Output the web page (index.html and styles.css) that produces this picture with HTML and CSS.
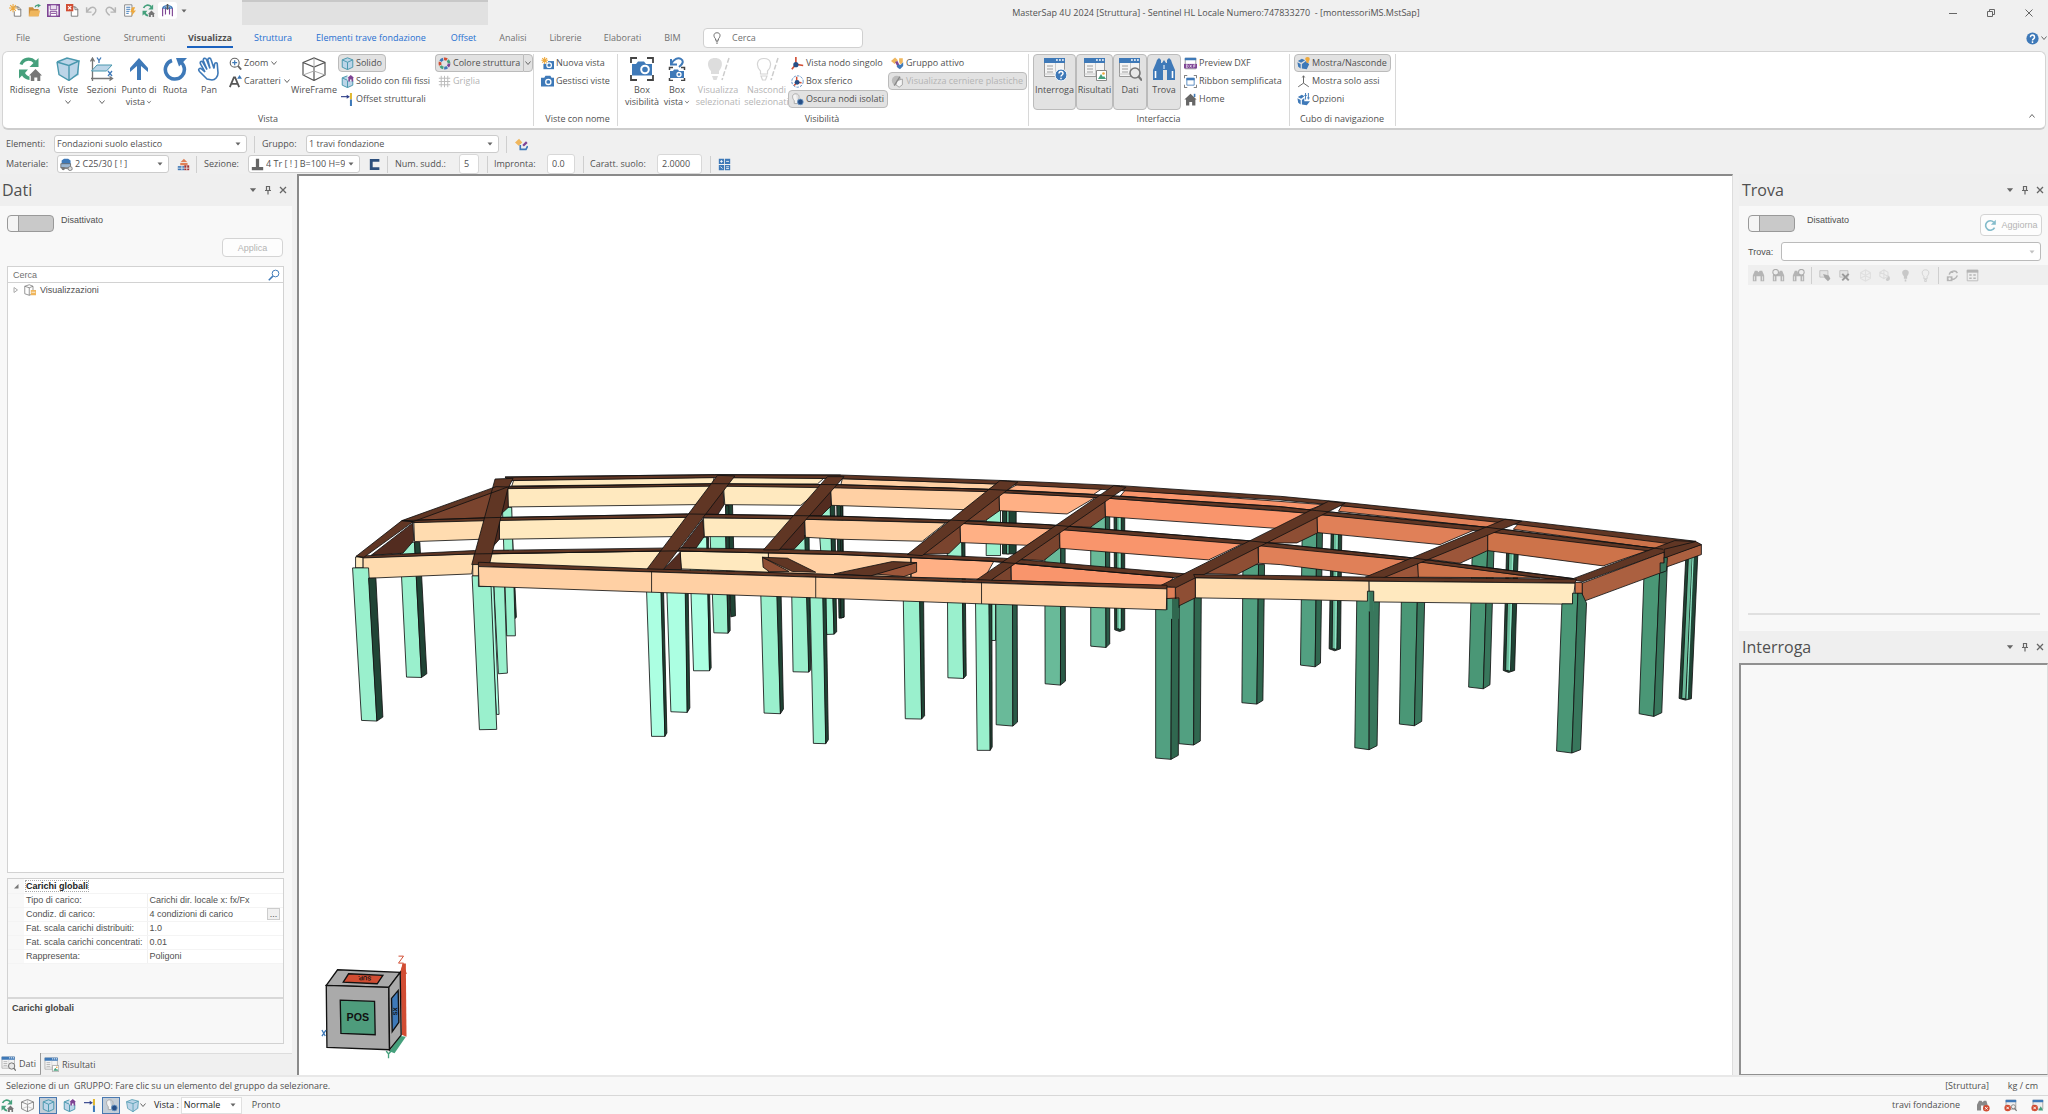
FILE: index.html
```html
<!DOCTYPE html>
<html lang="it">
<head>
<meta charset="utf-8">
<title>MasterSap 4U 2024 [Struttura]</title>
<link rel="stylesheet" href="styles.css">
</head>
<body>
<svg class="defs" aria-hidden="true">
  <symbol id="i-chev" viewBox="0 0 8 8"><path d="M1.5 2.5 4 5.5 6.500 2.500" fill="none" stroke="#666"/></symbol>
  <symbol id="i-tri" viewBox="0 0 8 8"><path d="M1.500 2.500h5L4 5.500z" fill="#666"/></symbol>
  <symbol id="i-pin" viewBox="0 0 10 10"><path d="M3.500 1v4M3 1.500h4M6.500 1v4M2 5.500h6M5 6v3.500" fill="none" stroke="#666" stroke-width="1.200"/></symbol>
  <symbol id="i-x" viewBox="0 0 10 10"><path d="M2 2l6 6M8 2 2 8" fill="none" stroke="#666" stroke-width="1.300"/></symbol>
  <symbol id="i-new" viewBox="0 0 16 16"><path d="M6 3.500h5.500l3 3V15h-8V9" fill="#fff" stroke="#666"/><path d="M11 3.500v3.500h3.500" fill="none" stroke="#666"/><path d="M5 0v10M0 5h10M1.500 1.500l7 7M8.500 1.500l-7 7" stroke="#eda83c" stroke-width="1.300"/></symbol>
  <symbol id="i-open" viewBox="0 0 16 16"><path d="M1 4h5l1.500 2H13v9H1z" fill="#c98d3c"/><path d="M3 8h12l-2 7H1z" fill="#efb65d"/><path d="M9 4c0-2 1.500-2.500 4-2.500" fill="none" stroke="#45a07c" stroke-width="1.500"/><path d="M12 0l4 1.500-4 3z" fill="#45a07c"/></symbol>
  <symbol id="i-save" viewBox="0 0 16 16"><path d="M1 1h14v14H1z" fill="#fff" stroke="#7e4494" stroke-width="2"/><path d="M4 1h8v6H4z" fill="#e9dcef" stroke="#7e4494"/><path d="M4 9h8v6H4zM5 11.500h6" fill="#fff" stroke="#7e4494" stroke-width="1.200"/></symbol>
  <symbol id="i-closedoc" viewBox="0 0 16 16"><path d="M6 3.500h5.500l3 3V15h-8V9" fill="#fff" stroke="#666"/><path d="M11 3.500v3.500h3.500" fill="none" stroke="#666"/><path d="M0 0h9v9H0z" fill="#d14d33"/><path d="M2.500 2.500l4 4M6.500 2.500l-4 4" stroke="#fff" stroke-width="1.400"/></symbol>
  <symbol id="i-undo" viewBox="0 0 16 16"><path d="M2 4v6h6M2.500 9.500C5 5 9 2.500 12 5s1 6-3 9" fill="none" stroke="#b5b5b5" stroke-width="1.800"/></symbol>
  <symbol id="i-docflash" viewBox="0 0 16 16"><path d="M2 1h9v14H2z" fill="#fff" stroke="#777"/><path d="M4 4h5M4 6.500h5M4 9h4M4 11.500h3" stroke="#3e79b8" stroke-width="1.200"/><path d="M11 4h4l-2 4h3l-6 7 1.500-5H9z" fill="#eda83c"/></symbol>
  <symbol id="i-redraw" viewBox="0 0 24 24"><path d="M3 7.500C5 2 12 0 17 5" fill="none" stroke="#45a07c" stroke-width="3.200"/><path d="M20.500 1v9h-9z" fill="#45a07c"/><path d="M1 12.500h9L7 16c1 2 2.500 3 4.500 3.500V23C8 22.500 5.500 21 4 18.500L1 21.500z" fill="#45a07c"/><path d="M17.500 12 24 18.500h-1.700V24h-3v-3.500h-3V24h-3.500v-5.500H11z" fill="#767676"/></symbol>
  <symbol id="i-frame" viewBox="0 0 16 16"><path d="M2 5v10M5.500 4v9M10.500 4v9M14 5v10" stroke="#7e4494" stroke-width="1.400"/><path d="M2 5c1-2 3-3 6-3s5 1 6 3M2 5h12M5 4l3 2 3-2" fill="none" stroke="#3e79b8" stroke-width="1.400"/><path d="M7 0h2v7H7z" fill="#555"/></symbol>
  <symbol id="i-cube" viewBox="0 0 24 24"><path d="M1 5 11 1l12 3v14l-10.500 5.500L3 17z" fill="#bcd5e8"/><path d="M1 5l12 3.500v15M1 5 11 1l12 3-10 4.500M1 5l2 12.500 10 6L21.500 17 23 4" fill="none" stroke="#4a98ae" stroke-width="1.400"/></symbol>
  <symbol id="i-section" viewBox="0 0 24 24"><path d="M2.500 24V2M0.500 4.500 2.500 1l2 3.500M1 21.500h21M19.500 19.500l3 2-3 2" fill="none" stroke="#767676" stroke-width="1.300"/><path d="M7 8h15l-5.500 6H1.500z" fill="#bcd5e8" stroke="#4a98ae"/><path d="M7 .500l2 3 2-3M9 3.500V6M18 14l4 5M22 14l-4 5" fill="none" stroke="#3e79b8" stroke-width="1.300"/></symbol>
  <symbol id="i-up" viewBox="0 0 24 24"><path d="M12 1 21 11v4l-7-6v14h-4V9l-7 6v-4z" fill="#3e79b8"/></symbol>
  <symbol id="i-rotate" viewBox="0 0 24 24"><path d="M9 3.500a9.500 9.500 0 1 0 7 .5" fill="none" stroke="#3e79b8" stroke-width="3.600"/><path d="M13 1h11l-8 8.500z" fill="#3e79b8"/></symbol>
  <symbol id="i-pan" viewBox="0 0 24 24"><path d="M10 22 2.500 14.500c-2-2.500.5-4 2-2.500L8 15 3.500 7c-1-2.500 1.500-3.500 2.500-1.500l4 7L6.500 4c-1-3 2-3.500 3-1.500l3.500 9L11 3.500c-.5-3 2.500-3 3-1l3 9 .5-4c.5-2.500 3-2 2.800 0L21 16c0 4-3 7-6 7z" fill="#fff" stroke="#3e79b8" stroke-width="1.600"/></symbol>
  <symbol id="i-zoom" viewBox="0 0 16 16"><circle cx="7" cy="7" r="5.500" fill="#fff" stroke="#666" stroke-width="1.400"/><path d="M7 4v6M4 7h6" stroke="#3e79b8" stroke-width="1.500"/><path d="M11 11l4 4.500" stroke="#666" stroke-width="2.200"/></symbol>
  <symbol id="i-font" viewBox="0 0 16 16"><path d="M1 15 6 3h1.500l5 12M3 11h7.500" fill="none" stroke="#555" stroke-width="2.200"/><path d="M13 0l3 4.500h-6z" fill="#3e79b8"/></symbol>
  <symbol id="i-wire" viewBox="0 0 24 24"><path d="M1 5.500 12 1l11 4.500V18l-11 5.500L1 18zM1 5.500 12 10l11-4.500M12 10v13.500" fill="none" stroke="#555" stroke-width="1.200"/><path d="M12 1v13M1 18l11-4 11 4" fill="none" stroke="#aaa"/></symbol>
  <symbol id="i-solid" viewBox="0 0 16 16"><path d="M1.500 3.500 8 1l6.500 2.500v9L8 15.500l-6.500-3z" fill="#bcd5e8"/><path d="M1.500 3.500 8 1l6.500 2.500v9L8 15.500l-6.500-3zM1.500 3.500 8 6.500l6.500-3M8 6.500v9" fill="none" stroke="#4a98ae" stroke-width="1.200"/></symbol>
  <symbol id="i-solidh" viewBox="0 0 16 16"><use href="#i-solid"/><path d="M8 0h8v7H8z" fill="#fff"/><path d="M12 0l4 3.500h-1V8h-2V5.500h-2V8H9V3.500H8z" fill="#7e4494"/></symbol>
  <symbol id="i-offset" viewBox="0 0 16 16"><path d="M0 4.500h8" stroke="#30408a" stroke-width="1.400"/><path d="M7 2l4 2.500L7 7z" fill="#30408a"/><path d="M11 0h2.500v8H11z" fill="#e0b830"/><path d="M11 8h2.500v8H11z" fill="#3e79b8"/></symbol>
  <symbol id="i-wheel" viewBox="0 0 16 16"><g fill="none" stroke-width="3.400" stroke-dasharray="4 31.200"><circle cx="8" cy="8" r="5.600" stroke="#7e4494"/><circle cx="8" cy="8" r="5.600" stroke="#3e79b8" stroke-dashoffset="-5"/><circle cx="8" cy="8" r="5.600" stroke="#45a07c" stroke-dashoffset="-10"/><circle cx="8" cy="8" r="5.600" stroke="#d14d33" stroke-dashoffset="-15"/><circle cx="8" cy="8" r="5.600" stroke="#3e79b8" stroke-dashoffset="-20"/><circle cx="8" cy="8" r="5.600" stroke="#d14d33" stroke-dashoffset="-25"/><circle cx="8" cy="8" r="5.600" stroke="#45a07c" stroke-dashoffset="-30"/></g></symbol>
  <symbol id="i-grid" viewBox="0 0 16 16"><path d="M4 1v14M8 1v14M12 1v14M1 4h14M1 8h14M1 12h14" stroke="#bbb" stroke-width="1.200"/></symbol>
  <symbol id="i-cam" viewBox="0 0 16 16"><path d="M0 3.500h4L5.500 1h6L13 3.500h3V14H0z" fill="#3e79b8"/><circle cx="9" cy="8.500" r="3.200" fill="#3e79b8" stroke="#fff" stroke-width="1.600"/></symbol>
  <symbol id="i-camnew" viewBox="0 0 16 16"><path d="M3 5h13v10H3z" fill="#3e79b8"/><circle cx="10" cy="10" r="2.800" fill="#3e79b8" stroke="#fff" stroke-width="1.500"/><circle cx="4.500" cy="4" r="4.500" fill="#fff"/><path d="M4.500 0v8.500M.500 4h8M1.500 1.500l6 5.500M7.500 1.500l-6 5.500" stroke="#eda83c" stroke-width="1.300"/></symbol>
  <symbol id="i-cambox" viewBox="0 0 24 24"><path d="M1 6V1h6M17 1h6v5M23 18v5h-6M7 23H1v-5" fill="none" stroke="#444" stroke-width="1.800"/><path d="M2 7h4l2-2.500h6L16 7h6v11.500H2z" fill="#3e79b8"/><circle cx="15" cy="12.500" r="3.800" fill="#3e79b8" stroke="#fff" stroke-width="2"/></symbol>
  <symbol id="i-camback" viewBox="0 0 24 24"><path d="M6 2v5.500h6M6 7C9 2 13 0 16 2s2 5-2 8" fill="none" stroke="#3e79b8" stroke-width="2"/><path d="M4.500 13v-2.500H8M16 10.500h3.500V13M19.500 21v2.500H16M8 23.500H4.500V21" fill="none" stroke="#444" stroke-width="1.500"/><path d="M5 14h3l1-1.500h4l1 1.500h5v7H5z" fill="#3e79b8"/><circle cx="14" cy="17.500" r="2" fill="none" stroke="#fff" stroke-width="1.300"/></symbol>
  <symbol id="i-bulbon" viewBox="0 0 24 24"><path d="M9 1c-9 0-8 9-4 13v3h8v-3c4-4 5-13-4-13zM6 19h6l-1.500 4h-3z" fill="#ddd"/><path d="M23 1 16 23" stroke="#ccc" stroke-width="1.500" stroke-dasharray="5 2"/></symbol>
  <symbol id="i-bulboff" viewBox="0 0 24 24"><path d="M9 1.500c-8 0-8 8-3.500 12.500V17h7v-3C17 9.500 17 1.500 9 1.500zM6 19h6l-1.500 4h-3z" fill="#fff" stroke="#d4d4d4" stroke-width="1.200"/><path d="M23 1 16 23" stroke="#ccc" stroke-width="1.500" stroke-dasharray="5 2"/></symbol>
  <symbol id="i-bulb" viewBox="0 0 16 16"><path d="M8 1C3 1 3 6 6 9v2h4V9c3-3 3-8-2-8zM6.500 13h3M7 15h2" fill="none" stroke="#666" stroke-width="1.200"/></symbol>
  <symbol id="i-bulbgray" viewBox="0 0 16 16"><path d="M8 1C3 1 3 6 6 9v3h4V9c3-3 3-8-2-8zM7 13h2v2.500H7z" fill="#c8c8c8"/></symbol>
  <symbol id="i-bulbline" viewBox="0 0 16 16"><path d="M8 1C3 1 3 6 6 9v3h4V9c3-3 3-8-2-8zM7 13h2v2.500H7z" fill="none" stroke="#ccc"/></symbol>
  <symbol id="i-node" viewBox="0 0 16 16"><path d="M6 0v9l9 1.500M6 9l-5 6" fill="none" stroke="#d14d33" stroke-width="2"/><circle cx="6" cy="9.500" r="3.200" fill="#274f86"/></symbol>
  <symbol id="i-sphere" viewBox="0 0 16 16"><circle cx="8" cy="8" r="7" fill="none" stroke="#3e79b8" stroke-dasharray="3 1.500"/><path d="M7 2v7l6 .5M7 9l-3 4" fill="none" stroke="#d14d33" stroke-width="1.800"/><circle cx="7.500" cy="9" r="3" fill="#274f86"/></symbol>
  <symbol id="i-dim" viewBox="0 0 16 16"><path d="M6 1C1 1 1 6 4 9.500V13h4" fill="#f4f4f4" stroke="#aaa" stroke-width="1.200"/><path d="M6 1c4 0 5 4 3 7" fill="none" stroke="#aaa"/><circle cx="11.500" cy="11" r="3.500" fill="#274f86" stroke="#6d9ac8"/></symbol>
  <symbol id="i-group" viewBox="0 0 16 16"><path d="M0 5 5 .500 8.500 4 4.500 8.500z" fill="#efb65d"/><path d="M5 6l3-1 3 6-2 3z" fill="#7e4494"/><path d="M10 1.500h4.500v4c0 4-4.500 4-4.500 0z" fill="#efb65d"/><path d="M8 9.500h4l3-3v4.500l-4 4-4-3z" fill="#3e79b8"/></symbol>
  <symbol id="i-groupset" viewBox="0 0 16 16"><path d="M0 5.500 5 1l4 4.500-4.500 4z" fill="#efb65d"/><path d="M9 8.500 13.500 4l2 2-4.500 4.500z" fill="#7e4494"/><path d="M6.500 8.500v5.500h7l2-4" fill="none" stroke="#3e79b8" stroke-width="2"/></symbol>
  <symbol id="i-hinge" viewBox="0 0 16 16"><circle cx="7" cy="7" r="6" fill="#bbb"/><path d="M7 7l7-2v7l-4 3-4-3z" fill="#f4f4f4" stroke="#999"/><path d="M4 13 11 2" stroke="#888" stroke-width="1.500"/></symbol>
  <symbol id="i-window" viewBox="0 0 24 24"><path d="M1.500 1.500h20v18h-20z" fill="#f4f4f4" stroke="#999"/><path d="M1 1h21v5H1z" fill="#3e79b8"/><path d="M13 3h1.800M16 3h1.800M19 3h1.800" stroke="#fff" stroke-width="1.600"/><path d="M4 9h6M4 12h6M4 15h6" stroke="#bbb" stroke-width="1.600"/><path d="M12.500 6v13M1.500 17h20" stroke="#ccc"/></symbol>
  <symbol id="i-winask" viewBox="0 0 24 24"><use href="#i-window"/><circle cx="18" cy="18" r="6" fill="#3e79b8" stroke="#fff"/><path d="M16 16.500c0-3 4-2.500 4 0 0 1.500-2 1.500-2 3M18 20.700v1.500" fill="none" stroke="#fff" stroke-width="1.500"/></symbol>
  <symbol id="i-winres" viewBox="0 0 24 24"><use href="#i-window"/><path d="M13.500 13.500h10v10h-10z" fill="#fff" stroke="#888"/><path d="M15 22l3-5 2 3 1-1 2 3z" fill="#45a07c"/><circle cx="20.500" cy="16.500" r="1.300" fill="#eda83c"/></symbol>
  <symbol id="i-winfind" viewBox="0 0 24 24"><use href="#i-window"/><circle cx="17" cy="16" r="5" fill="#e8e8e8" stroke="#777" stroke-width="1.600"/><path d="M20.500 19.500l3.500 4" stroke="#777" stroke-width="2.200"/></symbol>
  <symbol id="i-bino" viewBox="0 0 24 24"><path d="M1 23V13L4 6l1-3 2-2 2 2v3h1l2-3 2 3h1V3l2-2 2 2 1 3 3 7v10h-8V13h-4v10z" fill="#3e79b8"/><path d="M3.500 14v7M20.500 14v7" stroke="#fff" stroke-width="1.600"/><path d="M12 8v4" stroke="#fff"/></symbol>
  <symbol id="i-binogray" viewBox="0 0 16 16"><path d="M1 15V8l2.500-6h3L8 4l1.500-2h3L15 8v7h-4.500V9h-5v6z" fill="#b5b5b5"/><path d="M3 9v5M13 9v5" stroke="#eee"/></symbol>
  <symbol id="i-binoq" viewBox="0 0 16 16"><path d="M1 15V8l2-4h3l2 2 1.500-4h3L15 8v7h-4.500V9h-5v6z" fill="#b5b5b5"/><path d="M3 9v5M13 9v5" stroke="#eee"/><circle cx="4.500" cy="4" r="3.500" fill="#eee" stroke="#aaa" stroke-width="1.300"/></symbol>
  <symbol id="i-dxf" viewBox="0 0 16 16"><path d="M1.500 1.500h13v13h-13z" fill="#fff" stroke="#888"/><path d="M1 1h14v3H1z" fill="#3e79b8"/><path d="M0 8.500h16V14H0z" fill="#7e4494"/><path d="M3 13v-3.500c3 0 3 3.500 0 3.500M7 9.500l2.500 3.500M9.500 9.500 7 13M12 13V9.700h2M12 11.200h2" fill="none" stroke="#fff" stroke-width=".8"/></symbol>
  <symbol id="i-ribbon" viewBox="0 0 16 16"><path d="M.500 4V.500H4M12 .500h3.500V4M15.500 12v3.500H12M4 15.500H.500V12" fill="none" stroke="#555"/><path d="M3.500 4h9v8.500h-9z" fill="#fff" stroke="#3e79b8"/><path d="M3 3.500h10v3H3z" fill="#3e79b8"/></symbol>
  <symbol id="i-home" viewBox="0 0 16 16"><path d="M8 1l7.500 7H14v7.500h-4V11H6.500v4.500H2.500V8H.500z" fill="#666"/><path d="M12 1h2v4h-2z" fill="#3e79b8"/></symbol>
  <symbol id="i-nav" viewBox="0 0 16 16"><path d="M1 5l5-3 4 2-5 3zM.500 6.500l4 2V14l-3-2zM6 8.500 11 5l4 4-3 6-6-1z" fill="#3e79b8"/><path d="M13 0c-4 0-3 4-1.500 5v2h3V5C16 4 16.500 0 13 0z" fill="#eda83c"/></symbol>
  <symbol id="i-axes" viewBox="0 0 16 16"><path d="M8 1v9l6.500 4.500M8 10l-6.500 4.500M6.500 3 8 1l1.500 2" fill="none" stroke="#666" stroke-width="1.200"/></symbol>
  <symbol id="i-navopt" viewBox="0 0 16 16"><path d="M1 5l5-3 3 2-4 3zM.500 6.500l4 2V14l-3-2zM6 8.500 9 6v4h7l-4 5-6-1z" fill="#3e79b8"/><path d="M10.500 0v8M14 0v8M9 3h3M12.500 6h3" stroke="#3e79b8" stroke-width="1.200"/></symbol>
  <symbol id="i-help" viewBox="0 0 16 16"><circle cx="8" cy="8" r="7.500" fill="#3e79b8"/><path d="M5.500 6.500c0-4 5-3.500 5 0 0 2-2.500 2-2.500 4M8 11.500v2" fill="none" stroke="#fff" stroke-width="1.800"/></symbol>
  <symbol id="i-mat" viewBox="0 0 16 16"><path d="M2 3l3-2h5l3 2v5H2z" fill="#3e79b8"/><path d="M1 7h12v5H1zM1 12l14 2" fill="#9ab6d2" stroke="#666"/><circle cx="4" cy="13" r="2" fill="#777"/><circle cx="12.500" cy="13" r="2.500" fill="#ddd" stroke="#777"/></symbol>
  <symbol id="i-bricks" viewBox="0 0 16 16"><path d="M4.500 5 8.500 1l4 4z" fill="#e08058"/><path d="M4 6h9v3H4z" fill="#e08058"/><path d="M1 10h8v5H1z" fill="#3e79b8"/><path d="M9 9h6v6H9z" fill="#a03030"/><path d="M1 12.500h14M6 9v6M12 9v6" stroke="#eee"/></symbol>
  <symbol id="i-tee" viewBox="0 0 16 16"><path d="M6 1h4v10h5v4H1v-4h5z" fill="#666"/></symbol>
  <symbol id="i-channel" viewBox="0 0 16 16"><path d="M14 3H4v10h10" fill="none" stroke="#2c4f7c" stroke-width="3.500"/></symbol>
  <symbol id="i-calc" viewBox="0 0 16 16"><path d="M1 1h6.500v6.500H1zM8.500 1H15v6.500H8.500zM1 8.500h6.500V15H1zM8.500 8.500H15V15H8.500z" fill="#3e79b8"/><path d="M2.500 4.200H6M4.200 2.500V6M10 4.200h3.500M3 10.500l2.500 2.500M10 10.800h3.500M10 13h3.500" stroke="#fff"/></symbol>
  <symbol id="i-search" viewBox="0 0 16 16"><circle cx="10" cy="6" r="4.500" fill="none" stroke="#3e79b8" stroke-width="1.300"/><path d="M6.500 9.500 1 15" stroke="#3e79b8" stroke-width="2"/></symbol>
  <symbol id="i-folder" viewBox="0 0 16 16"><path d="M1 3l6-2 5 2v10l-5 2-6-2zM1 3l6 2 5-2M7 5v10" fill="#fff" stroke="#777"/><path d="M9 8h7v7H9z" fill="#efb65d"/><path d="M10 11h5" stroke="#fff"/></symbol>
  <symbol id="i-refresh" viewBox="0 0 16 16"><path d="M13 10.500A5.800 5.800 0 1 1 12 4" fill="none" stroke="#84bccb" stroke-width="2"/><path d="M14.500 1v6H8.500z" fill="#84bccb"/></symbol>
  <symbol id="i-sel" viewBox="0 0 16 16"><path d="M1 2h10v8H1z" fill="#e4e4e4" stroke="#bbb"/><path d="M5 6l7 2 2 4-3 3-4-4z" fill="#a8a8a8"/></symbol>
  <symbol id="i-selx" viewBox="0 0 16 16"><path d="M1 2h10v8H1z" fill="#e4e4e4" stroke="#bbb"/><path d="M4 6l8 8M12 6l-8 8" stroke="#999" stroke-width="2.500"/></symbol>
  <symbol id="i-net" viewBox="0 0 16 16"><path d="M8 1l6 3.500v7L8 15l-6-3.500v-7zM8 1v14M2 4.500l12 7M14 4.500l-12 7" fill="none" stroke="#e0e0e0" stroke-width="1.400"/></symbol>
  <symbol id="i-netd" viewBox="0 0 16 16"><path d="M6 1l5 3v5l-5 3-5-3V4zM6 1v11M1 4l10 5" fill="none" stroke="#dcdcdc" stroke-width="1.300"/><path d="M12 8c4 5-1 8-3 6s2-3 3-6z" fill="#ccc"/></symbol>
  <symbol id="i-sync" viewBox="0 0 16 16"><path d="M5 4h4M4 7c1-5 8-6 10-2M14 8c-2 5-6 5-8 4" fill="none" stroke="#b5b5b5" stroke-width="1.800"/><path d="M1 9h7v6H1z" fill="#b5b5b5"/><circle cx="4.500" cy="12" r="1.500" fill="#eee"/></symbol>
  <symbol id="i-list" viewBox="0 0 16 16"><path d="M1.500 1.500h13v13h-13z" fill="#eee" stroke="#b5b5b5"/><path d="M1 1h14v3.500H1z" fill="#b5b5b5"/><path d="M4 7.500h3M9 7.500h3M4 11.500h3M9 11.500h3" stroke="#b5b5b5" stroke-width="1.800"/></symbol>
  <symbol id="i-err" viewBox="0 0 16 16"><circle cx="4.500" cy="11" r="4" fill="#d14d33"/><path d="M3 9.500l3 3M6 9.500l-3 3" stroke="#fff" stroke-width="1.200"/></symbol>
  <symbol id="i-binoerr" viewBox="0 0 16 16"><path d="M0 14V7l2.500-5h3L7 4l1.500-2h3L13 7v7H8V8H5v6z" fill="#888"/><circle cx="11.500" cy="11.500" r="4" fill="#d14d33"/><path d="M10 10l3 3M13 10l-3 3" stroke="#fff" stroke-width="1.200"/></symbol>
  <symbol id="i-finderr" viewBox="0 0 16 16"><path d="M2.500 1.500h12v11h-12z" fill="#eee" stroke="#999"/><path d="M2 1h13v3H2z" fill="#3e79b8"/><circle cx="11.500" cy="9.500" r="2.500" fill="none" stroke="#777"/><path d="M13 11.500l2.500 3" stroke="#777" stroke-width="1.500"/><use href="#i-err" width="16" height="16"/></symbol>
  <symbol id="i-reserr" viewBox="0 0 16 16"><path d="M2.500 1.500h12v11h-12z" fill="#eee" stroke="#999"/><path d="M2 1h13v3H2z" fill="#3e79b8"/><path d="M9 14l3-5 3 5z" fill="#45a07c"/><use href="#i-err" width="16" height="16"/></symbol>
</svg>

<header class="titlebar">
  <div class="quick">
    <button aria-label="Nuovo"><svg class="ic"><use href="#i-new"/></svg></button>
    <button aria-label="Apri"><svg class="ic"><use href="#i-open"/></svg></button>
    <button aria-label="Salva"><svg class="ic"><use href="#i-save"/></svg></button>
    <button aria-label="Chiudi"><svg class="ic"><use href="#i-closedoc"/></svg></button>
    <button aria-label="Annulla"><svg class="ic"><use href="#i-undo"/></svg></button>
    <button aria-label="Ripeti"><svg class="ic flip"><use href="#i-undo"/></svg></button>
    <button aria-label="Relazione"><svg class="ic"><use href="#i-docflash"/></svg></button>
    <button aria-label="Ridisegna"><svg class="ic"><use href="#i-redraw"/></svg></button>
    <button aria-label="Struttura" class="lit"><svg class="ic"><use href="#i-frame"/></svg></button>
    <button aria-label="Personalizza" class="slim"><svg class="ic8"><use href="#i-tri"/></svg></button>
  </div>
  <div class="context-tab"></div>
  <h1 class="app-title">MasterSap 4U 2024 [Struttura] - Sentinel HL Locale Numero:747833270 &nbsp;- [montessoriMS.MstSap]</h1>
  <div class="winctl">
    <button aria-label="Riduci"><svg class="ic10" viewBox="0 0 10 10"><path d="M1 5.500h8" stroke="#666"/></svg></button>
    <button aria-label="Ripristina"><svg class="ic10" viewBox="0 0 10 10"><path d="M1.500 3.500h5v5h-5zM3.500 3V1.500h5v5H7" fill="none" stroke="#666"/></svg></button>
    <button aria-label="Esci"><svg class="ic10" viewBox="0 0 10 10"><path d="M1.500 1.500l7 7M8.500 1.500l-7 7" stroke="#666"/></svg></button>
  </div>
</header>

<nav class="tabs">
  <a class="t-file" href="#file">File</a><a class="w60" href="#gestione">Gestione</a><a class="w65" href="#strumenti">Strumenti</a><a class="w66 active" href="#visualizza"><span>Visualizza</span></a><a class="w60 ctx" href="#struttura">Struttura</a><a class="w136 ctx" href="#elementi">Elementi trave fondazione</a><a class="w49 ctx" href="#offset">Offset</a><a class="w50" href="#analisi">Analisi</a><a class="w55" href="#librerie">Librerie</a><a class="w59" href="#elaborati">Elaborati</a><a class="w41" href="#bim">BIM</a>
  <label class="cmdsearch"><svg class="ic12"><use href="#i-bulb"/></svg><input type="text" placeholder="Cerca" aria-label="Cerca"></label>
  <button class="help" aria-label="Aiuto"><svg class="ic"><use href="#i-help"/></svg><svg class="ic8"><use href="#i-chev"/></svg></button>
</nav>

<section class="ribbon">
  <div class="rgroup g-vista">
    <div class="rbody">
      <button class="big w46"><svg class="ic24"><use href="#i-redraw"/></svg>Ridisegna</button>
      <button class="big w30"><svg class="ic24"><use href="#i-cube"/></svg>Viste<svg class="ic8"><use href="#i-chev"/></svg></button>
      <button class="big w37"><svg class="ic24"><use href="#i-section"/></svg>Sezioni<svg class="ic8"><use href="#i-chev"/></svg></button>
      <button class="big w38"><svg class="ic24"><use href="#i-up"/></svg>Punto di<span>vista<svg class="ic6"><use href="#i-chev"/></svg></span></button>
      <button class="big w34"><svg class="ic24"><use href="#i-rotate"/></svg>Ruota</button>
      <button class="big w34"><svg class="ic24"><use href="#i-pan"/></svg>Pan</button>
      <div class="small w64">
        <button><svg class="ic"><use href="#i-zoom"/></svg>Zoom<svg class="ic8"><use href="#i-chev"/></svg></button>
        <button><svg class="ic"><use href="#i-font"/></svg>Caratteri<svg class="ic8"><use href="#i-chev"/></svg></button>
      </div>
      <button class="big w48"><svg class="ic24"><use href="#i-wire"/></svg>WireFrame</button>
      <div class="small w97">
        <button class="on"><svg class="ic"><use href="#i-solid"/></svg>Solido</button>
        <button><svg class="ic"><use href="#i-solidh"/></svg>Solido con fili fissi</button>
        <button><svg class="ic"><use href="#i-offset"/></svg>Offset strutturali</button>
      </div>
      <div class="small w95">
        <div class="split"><button class="on"><svg class="ic"><use href="#i-wheel"/></svg>Colore struttura</button><button class="on drop" aria-label="Opzioni colore"><svg class="ic8"><use href="#i-chev"/></svg></button></div>
        <button disabled><svg class="ic"><use href="#i-grid"/></svg>Griglia</button>
      </div>
    </div>
    <h2>Vista</h2>
  </div>
  <div class="rgroup g-nome">
    <div class="rbody">
      <div class="small">
        <button><svg class="ic"><use href="#i-camnew"/></svg>Nuova vista</button>
        <button><svg class="ic"><use href="#i-cam"/></svg>Gestisci viste</button>
      </div>
    </div>
    <h2>Viste con nome</h2>
  </div>
  <div class="rgroup g-vis">
    <div class="rbody">
      <button class="big w42"><svg class="ic24"><use href="#i-cambox"/></svg>Box<span>visibilità</span></button>
      <button class="big w28"><svg class="ic24"><use href="#i-camback"/></svg>Box<span>vista<svg class="ic6"><use href="#i-chev"/></svg></span></button>
      <button class="big w54" disabled><svg class="ic24"><use href="#i-bulbon"/></svg>Visualizza<span>selezionati</span></button>
      <button class="big w43" disabled><svg class="ic24"><use href="#i-bulboff"/></svg>Nascondi<span>selezionati</span></button>
      <div class="small w100">
        <button><svg class="ic"><use href="#i-node"/></svg>Vista nodo singolo</button>
        <button><svg class="ic"><use href="#i-sphere"/></svg>Box sferico</button>
        <button class="on"><svg class="ic"><use href="#i-dim"/></svg>Oscura nodi isolati</button>
      </div>
      <div class="small w137">
        <button><svg class="ic"><use href="#i-group"/></svg>Gruppo attivo</button>
        <button class="on" disabled><svg class="ic"><use href="#i-hinge"/></svg>Visualizza cerniere plastiche</button>
      </div>
    </div>
    <h2>Visibilità</h2>
  </div>
  <div class="rgroup g-int">
    <div class="rbody">
      <button class="big on w43"><svg class="ic24"><use href="#i-winask"/></svg>Interroga</button>
      <button class="big on w37"><svg class="ic24"><use href="#i-winres"/></svg>Risultati</button>
      <button class="big on w34"><svg class="ic24"><use href="#i-winfind"/></svg>Dati</button>
      <button class="big on w34"><svg class="ic24"><use href="#i-bino"/></svg>Trova</button>
      <div class="small">
        <button><svg class="ic"><use href="#i-dxf"/></svg>Preview DXF</button>
        <button><svg class="ic"><use href="#i-ribbon"/></svg>Ribbon semplificata</button>
        <button><svg class="ic"><use href="#i-home"/></svg>Home</button>
      </div>
    </div>
    <h2>Interfaccia</h2>
  </div>
  <div class="rgroup g-cubo">
    <div class="rbody">
      <div class="small w97">
        <button class="on wide"><svg class="ic"><use href="#i-nav"/></svg>Mostra/Nasconde</button>
        <button><svg class="ic"><use href="#i-axes"/></svg>Mostra solo assi</button>
        <button><svg class="ic"><use href="#i-navopt"/></svg>Opzioni</button>
      </div>
    </div>
    <h2>Cubo di navigazione</h2>
  </div>
  <button class="collapse" aria-label="Comprimi"><svg class="ic8 flipv"><use href="#i-chev"/></svg></button>
</section>

<section class="props">
  <div class="prow">
    <label class="l48" for="elementi">Elementi:</label>
    <div class="combo w193"><select id="elementi"><option>Fondazioni suolo elastico</option></select><svg class="ic8"><use href="#i-tri"/></svg></div>
    <i class="sep"></i>
    <label class="l44" for="gruppo">Gruppo:</label>
    <div class="combo w193"><select id="gruppo"><option>1 travi fondazione</option></select><svg class="ic8"><use href="#i-tri"/></svg></div>
    <i class="sep"></i>
    <button aria-label="Gruppo attivo"><svg class="ic"><use href="#i-groupset"/></svg></button>
  </div>
  <div class="prow">
    <label class="l51" for="materiale">Materiale:</label>
    <div class="combo w112"><svg class="ic"><use href="#i-mat"/></svg><select id="materiale"><option>2 C25/30 [ ! ]</option></select><svg class="ic8"><use href="#i-tri"/></svg></div>
    <button aria-label="Materiali"><svg class="ic"><use href="#i-bricks"/></svg></button>
    <i class="sep"></i>
    <label class="l44" for="sezione">Sezione:</label>
    <div class="combo w112"><svg class="ic"><use href="#i-tee"/></svg><select id="sezione"><option>4 Tr [ ! ] B=100 H=90</option></select><svg class="ic8"><use href="#i-tri"/></svg></div>
    <button aria-label="Sezioni"><svg class="ic"><use href="#i-channel"/></svg></button>
    <i class="sep"></i>
    <label class="l64" for="sudd">Num. sudd.:</label>
    <input class="w20" id="sudd" type="text" value="5">
    <i class="sep tight"></i>
    <label class="l53" for="impronta">Impronta:</label>
    <input class="w28" id="impronta" type="text" value="0.0">
    <i class="sep tight"></i>
    <label class="l67" for="suolo">Caratt. suolo:</label>
    <input class="w45" id="suolo" type="text" value="2.0000">
    <i class="sep tight"></i>
    <button aria-label="Calcola"><svg class="ic"><use href="#i-calc"/></svg></button>
  </div>
</section>

<main class="work">
  <aside class="dock left">
    <header class="dhead"><h2>Dati</h2><button aria-label="Menu"><svg class="ic10"><use href="#i-tri"/></svg></button><button aria-label="Blocca"><svg class="ic10"><use href="#i-pin"/></svg></button><button aria-label="Chiudi"><svg class="ic10"><use href="#i-x"/></svg></button></header>
    <div class="dbody">
      <label class="switch"><input type="checkbox">Disattivato</label>
      <div class="right"><button class="push" disabled>Applica</button></div>
      <div class="tree">
        <label class="treesearch"><input type="text" placeholder="Cerca" aria-label="Cerca visualizzazioni"><svg class="ic12"><use href="#i-search"/></svg></label>
        <ul><li><svg class="ic8" viewBox="0 0 8 8"><path d="M2 1.500 5.500 4 2 6.500z" fill="#fff" stroke="#aaa"/></svg><svg class="ic12"><use href="#i-folder"/></svg>Visualizzazioni</li></ul>
      </div>
      <div class="pgrid">
        <table>
          <colgroup><col class="c-gut"><col class="c-key"><col><col class="c-more"></colgroup>
          <thead><tr><td class="gut"><svg class="ic8" viewBox="0 0 8 8"><path d="M6.500 2v4.500H2z" fill="#777"/></svg></td><th colspan="3"><span>Carichi globali</span></th></tr></thead>
          <tbody>
          <tr><td class="gut"></td><td class="k">Tipo di carico:</td><td>Carichi dir. locale x: fx/Fx</td><td class="m"></td></tr>
          <tr><td class="gut"></td><td class="k">Condiz. di carico:</td><td>4 condizioni di carico</td><td class="m"><button aria-label="Modifica">...</button></td></tr>
          <tr><td class="gut"></td><td class="k">Fat. scala carichi distribuiti:</td><td>1.0</td><td class="m"></td></tr>
          <tr><td class="gut"></td><td class="k">Fat. scala carichi concentrati:</td><td>0.01</td><td class="m"></td></tr>
          <tr><td class="gut"></td><td class="k">Rappresenta:</td><td>Poligoni</td><td class="m"></td></tr>
          </tbody>
        </table>
        <p class="desc">Carichi globali</p>
      </div>
    </div>
    <div class="dtabs"><button class="cur"><svg class="ic15"><use href="#i-winfind"/></svg>Dati</button><button><svg class="ic15"><use href="#i-winres"/></svg>Risultati</button></div>
  </aside>

  <section class="viewport">
    <svg class="scene" viewBox="298 175 1434 900" role="img" aria-label="Modello della struttura">
      <g transform="translate(340 460) scale(.33333)" class="model">
        <!-- pilastri, campata sinistra -->
        <path class="ca" d="M176 245h44l21 406-45-1z"/><path class="cd" d="M220 245h16l21 395-16 11z"/>
        <path class="cd" d="M510 140l16 330-5 5z"/><path class="ca" d="M484 140h28l11 386h-26z"/>
        <path class="ca" d="M458 370h32l9 268-27 2z"/><path class="cb" d="M445 360h12l17 402h-8z"/>
        <path class="cd" d="M1155 130h20l9 336-14 3z"/><path class="ca" d="M1108 225h46l8 293-43-1z"/><path class="cd" d="M1154 135l8 383 6-8-4-375z"/>
        <path class="cb" d="M1045 230h53l8 401h-48z"/><path class="cd" d="M1098 230l8 401 5-9-8-392z"/>
        <path class="cb" d="M978 390h57l4 366-49-2z"/><path class="cd" d="M1033 390l6 366 8-13-5-353z"/>
        <path class="cb" d="M917 390h45l10 438h-40z"/><path class="cd" d="M960 390l12 438 6-10-10-428z"/>
        <path class="cd" d="M1488 130h18l4 340-15 3z"/><path class="ca" d="M1430 130h40l10 391-22 1z"/><path class="cd" d="M1468 130h14l6 384-8 7z"/>
        <path class="ca" d="M1350 225h53l1 410-47-1z"/><path class="cd" d="M1392 225h13l5 403-6 7z"/>
        <path class="ca" d="M1260 400h50l9 360-49-2z"/><path class="cd" d="M1308 400h13l7 346-9 14z"/>
        <path class="ca" d="M1408 405h42l5 445-37-1z"/><path class="cd" d="M1446 405h10l7 433-8 12z"/>
        <!-- pilastri, campata centrale -->
        <g transform="translate(1500)">
          <path class="cd" d="M486 150h41v130h-41z"/><path class="cm" d="M498 150h8v130h-8z"/>
          <path class="ca" d="M437 150h43v135h-43zM453 430h12v110h-12z"/>
          <path class="ca" d="M188 415h50l5 361-49-1z"/><path class="cd" d="M237 415h12l3 351-9 10z"/>
          <path class="ca" d="M320 240h44l5 414-47-2z"/><path class="cd" d="M364 245h9l4 400-8 9z"/>
          <path class="cd" d="M0 135h6v150H0zM0 412h10v58l-10 3z"/>
          <path class="ca" d="M405 425h42l2 445h-39z"/><path class="cd" d="M445 425h9l1 435-6 10z"/>
          <path class="cm" d="M466 425h51v372l-50-4z"/><path class="cn" d="M516 425h14l1 360-14 12z"/>
          <path class="cm" d="M613 255h48l-1 419-46-4z"/><path class="cn" d="M661 255h13l1 407-15 12z"/>
          <path class="cm" d="M751 165h44l2 396-46-4z"/><path class="cn" d="M795 165h13v385l-11 11z"/>
          <path class="cd" d="M821 165h32v343l-15 5-15-5z"/><path class="cm" d="M829 165h14v340h-14z"/><path class="hl" d="M838 167v338"/>
          <path class="cg" d="M1208 312h47l-5 419-45-4z"/><path class="ch" d="M1255 312h18l-5 408-18 11z"/>
          <path class="cg" d="M1016 412h46l-2 442-44-4z"/><path class="ch" d="M1062 405h21l-3 437-20 12z"/>
          <path class="cg" d="M946 415h48l-2 482-46-4z"/><path class="ch" d="M994 410h22l-2 475-22 12z"/>
        </g>
        <!-- pilastri, campata destra -->
        <g transform="translate(2760 30)">
          <path class="cg" d="M126 185h44l-5 404-44-5z"/><path class="ch" d="M170 185h17l-6 393-16 11z"/>
          <path class="cd" d="M213 185h32l-4 350-17 6-17-6z"/><path class="cm" d="M220 185h14l-4 350h-14z"/><path class="hl" d="M231 187l-5 348"/>
          <path class="ck" d="M637 235h46l-13 420-44-5z"/><path class="cj" d="M683 235h19l-12 408-20 12z"/>
          <path class="cd" d="M740 240h35l-11 360-18 6-16-6z"/><path class="cm" d="M747 240h15l-11 360h-14z"/><path class="hl" d="M759 242l-11 358"/>
          <path class="ck" d="M424 385h48l-9 381-45-5z"/><path class="cj" d="M472 385h22l-9 368-22 13z"/>
          <path class="ck" d="M290 385h38l-1 453-43-6z"/><path class="cj" d="M328 385h30l-7 441-24 12z"/>
          <path class="ck" d="M1153 300l48-20-19 458-44-8z"/><path class="cj" d="M1201 270h22l-17 457-24 11z"/>
          <path class="cd" d="M1278 262l36-7-19 430-18 4-19-5z"/><path class="cm" d="M1286 260l12-2-20 427-12-1z"/><path class="hl" d="M1300 260l-18 425"/>
        </g>
        <!-- travi posteriori: facce -->
        <path class="b1" d="M518 58 1120 50 1115 72 512 77zM1172 50 1450 52 1430 70 1160 72z"/>
        <path class="b3" d="M1505 54 1970 70 1945 86 1500 74z"/>
        <path class="b4" d="M2030 72 2285 84 2260 101 2000 88z"/>
        <path class="b5" d="M2355 88 2950 132 2900 150 2340 106z"/>
        <path class="b6" d="M3005 135 3505 182 3440 200 2995 152z"/><path class="b7" d="M3535 190 4000 245 3965 266 3520 206z"/>
        <path class="b1" d="M500 82 1120 76 1065 132 500 139zM1148 76 1450 77 1380 134 1152 132z"/>
        <path class="b3" d="M1470 77 1950 92 1870 147 1500 135 1472 134z"/>
        <path class="b4" d="M1975 96 2265 110 2180 160 1977 150z"/>
        <path class="b5" d="M2294 112 2910 158 2820 204 2295 168z"/>
        <path class="b6" d="M2930 161 3410 205 3300 252 2932 216z"/><path class="b7" d="M3443 212 3930 268 3790 316 3443 270z"/>
        <path class="s1" d="M500 82l2 58-35 32 15-90zM1146 78l4 54-22 34-45-4zM1468 78l4 57-32 32-50-2z"/>
        <path class="s2" d="M1975 95l2 55-42 30-80 0zM2292 112l3 56-45 32-100-3z"/>
        <path class="s3" d="M2930 161l2 56-62 30-110 0z"/><path class="s4" d="M3443 212v58l-83 38-120-15z"/>
        <path class="s2" d="M205 184 480 78 435 178z"/>
        <!-- fila intermedia -->
        <path class="b2" d="M218 185 430 178 420 236 220 243z"/>
        <path class="b1" d="M475 178 1040 170 1000 228 475 236zM1088 172 1380 174 1330 229 1090 228z"/>
        <path class="b3" d="M1392 176 1815 187 1745 242 1500 236 1394 230z"/>
        <path class="b4" d="M1858 188 2140 204 2060 254 1860 246z"/>
        <path class="b5" d="M2158 206 2710 248 2605 298 2158 263z"/>
        <path class="b6" d="M2755 250 3200 298 3110 348 2820 312 2755 308z"/>
        <path class="b7" d="M3233 302 3600 352 3233 350z"/>
        <path class="s1" d="M215 187l3 53-33 38-95 6zM475 178v58l-30 34 10-90zM1086 176l4 52-24 34-45 0zM1391 178l1 54-32 34-48 0z"/>
        <path class="s2" d="M1858 190l2 55-35 34-80 2zM2156 206l2 56-48 38-100-5z"/>
        <path class="s3" d="M2753 252l2 56-65 34-120-4z"/><path class="s4" d="M3232 304l3 46-140 4z"/>
        <!-- fila anteriore interna -->
        <path class="b2" d="M65 290 400 280 392 340 84 353 65 320z"/><path class="b1" d="M43 289h22v33H43z"/>
        <path class="b1" d="M448 280 1000 270 935 328 445 308zM1018 272 1283 272V335L1020 325z"/>
        <path class="b3" d="M1283 272 1710 288V350L1283 336z"/>
        <path class="b4" d="M1712 290 1960 302 1930 356 1712 350z"/>
        <path class="b5" d="M2012 308 2500 350 2480 376 2012 360z"/>
        <path class="s1" d="M1018 275l4 52h-55z"/><path class="s2" d="M2010 308l2 52h-60z"/>
        <!-- estradossi longitudinali -->
        <path class="tp" d="M492 49 1120 42 1500 43 2000 60 2340 75 2820 107 2980 122 3520 178 4068 242 4010 252 3520 190 3000 135 2820 118 2280 86 1970 70 1500 54 1120 51 500 60z"/>
        <path class="tp" d="M462 77 1120 69 1500 72 1940 86 2260 102 2820 138 2930 150 3440 200 3970 266 3935 272 3440 213 2930 161 2820 150 2290 112 1940 93 1500 82 1120 76 500 84z"/>
        <path class="tp" d="M185 180 450 171 1040 160 1500 167 1820 178 2120 192 2720 240 3200 290 3700 354 3650 358 3190 298 2700 250 2160 207 1840 187 1500 178 1040 170 450 180 215 186z"/>
        <path class="tp" d="M45 287 400 270 1000 262 1280 265 1500 272 1710 280 1990 293 2560 342 2500 351 1950 302 1500 282 1000 271 400 280 68 292z"/>
        <!-- estradossi trasversali -->
        <path class="tp" d="M45 287 182 180 216 183 68 290zM182 180 465 78 500 79 216 183zM462 55 516 53 500 85 445 312 392 312zM1130 44 1182 46 965 330 918 326zM1460 48 1510 48 1315 268 1268 268zM1978 60 2032 64 1745 285 1700 282zM2320 75 2357 80 1950 360 1908 358zM2965 122 3015 128 2508 384 2463 374zM3495 176 3545 182 3120 356 3075 350zM4005 240 4068 243 3973 276 3730 363 3690 358z"/>
        <path class="ln" d="M492 49 1120 42 1500 43M500 79 1120 69 1500 72 1940 86 2260 102 2820 138 2930 150 3440 200 3970 266M185 180 450 171 1040 160 1500 167 1820 178 2120 192 2720 240 3200 290 3700 354M400 280 1000 271 1500 282 1950 302 2500 351"/>
        <!-- controventi interni -->
        <path class="s3" d="M1265 290l80 43h-60l-18-13z"/><path class="tp" d="M1265 290l75 3 85 42-70-2z"/>
        <path class="s4" d="M1600 340 1728 306V334L1690 348z"/><path class="tp" d="M1480 340 1655 303 1728 306 1590 346z"/>
        <!-- travi di facciata -->
        <path class="tp" d="M412 305 925 325 1425 340 1920 358 2480 374V386L1925 366 1425 350 930 334 412 318z"/>
        <path class="b3" d="M412 318 930 334 1425 350 1925 367 2480 385 2478 448 1922 430 1425 412 930 395 414 377z"/>
        <path class="ln" d="M932 333v62M1425 348v64M1923 364v66"/>
        <path class="tp" d="M2560 342 2820 345 3090 350 3710 356 3705 368 3090 362 2565 352z"/>
        <path class="b2" d="M2565 352 3087 362V422L2820 416 2565 412z"/><path class="b1" d="M3087 362 3706 368 3698 431 3088 424z"/>
        <path class="s3" d="M2505 382 2565 352V412L2508 440z"/><path class="b6" d="M2480 380h25v36h-25z"/>
        <path class="s5" d="M3727 368 3973 275V333L3727 424zM3973 290 4085 252V282L3978 320z"/><path class="b7" d="M3706 366h21v34h-21z"/>
        <path class="tp" d="M3973 266 4068 243 4085 252 3975 292z"/>
        <path class="b2" d="M395 312h17v35h-17z"/>
        <!-- pilastri in primo piano -->
        <path class="ca" d="M34 322h48l25 460-46-2z"/><path class="cd" d="M82 353h22l21 417-18 12z"/>
        <path class="ca" d="M393 346h19v32h38l17 429-52 1z"/>
        <path class="cg nos" d="M2480 415h17v60h-17z"/><path class="ch nos" d="M2495 415h21v60h-21z"/><path class="ln" d="M2480 448v-34l36-2v30"/>
        <path class="ck nos" d="M3082 392h19v60h-19z"/><path class="cj nos" d="M3088 394h13v60h-13z"/><path class="ln" d="M3082 422v-30h19v30"/>
        <path class="ck" d="M3666 430h32v-32h16l-18 480-46-6z"/><path class="cj" d="M3714 398h12l14 30-18 440-26 10z"/>
        <path class="cj" d="M3961 335v-28h12v-16h10l-3 40-17 6z"/>
      </g>
      <g transform="translate(0 860) scale(.33333)" class="navcube">
        <path d="M1198 338l6-28 10 0 2 220-14-6z" fill="#d14d33"/><path d="M1206 308l11 34h-22z" fill="#d14d33"/>
        <path d="M1198 528l16 2-34 50-16-6z" fill="#45a07c"/>
        <path class="face" d="M975 376 1009 329 1197 337 1163 382z"/><path class="face" d="M975 376 1163 382 1165 569 977 562z"/><path class="face" d="M1163 382 1197 337 1200 525 1165 569z"/>
        <path d="M1042 341 1145 346 1128 371 1026 366z" fill="#d14d33" stroke="#111" stroke-width="4"/>
        <path d="M1017 420 1120 424 1122 524 1019 520z" fill="#4e9c7c" stroke="#111" stroke-width="4"/>
        <path d="M1171 415 1191 391 1193 487 1173 515z" fill="#3e79b8" stroke="#111" stroke-width="4"/>
        <text x="1036" y="484" class="pos">POS</text>
        <text x="0" y="0" class="sm" transform="translate(1110 349) rotate(182)">SUP.</text>
        <text x="0" y="0" class="sm" transform="translate(1188 466) rotate(-88)">SX</text>
        <path d="M1192 288h15l-15 21h15" fill="none" stroke="#d14d33" stroke-width="3"/><path d="M962 510l10 18M974 510l-12 18" stroke="#3e79b8" stroke-width="4"/><path d="M1155 573l7 9 8-9M1162 582v13" fill="none" stroke="#45a07c" stroke-width="4"/>
      </g>
    </svg>
  </section>

  <aside class="dock rightdock">
    <header class="dhead"><h2>Trova</h2><button aria-label="Menu"><svg class="ic10"><use href="#i-tri"/></svg></button><button aria-label="Blocca"><svg class="ic10"><use href="#i-pin"/></svg></button><button aria-label="Chiudi"><svg class="ic10"><use href="#i-x"/></svg></button></header>
    <div class="dbody find">
      <div class="findtop"><label class="switch"><input type="checkbox">Disattivato</label><button class="push upd" disabled><svg class="ic"><use href="#i-refresh"/></svg>Aggiorna</button></div>
      <div class="findrow"><label for="trova">Trova:</label><div class="combo"><select id="trova"><option></option></select><svg class="ic8 pale"><use href="#i-tri"/></svg></div></div>
      <div class="findtools">
        <button aria-label="Trova"><svg class="ic"><use href="#i-binogray"/></svg></button><button aria-label="Precedente"><svg class="ic"><use href="#i-binoq"/></svg></button><button aria-label="Successivo"><svg class="ic flip"><use href="#i-binoq"/></svg></button><i class="sep"></i><button aria-label="Seleziona"><svg class="ic"><use href="#i-sel"/></svg></button><button aria-label="Deseleziona"><svg class="ic"><use href="#i-selx"/></svg></button><button aria-label="Rete"><svg class="ic"><use href="#i-net"/></svg></button><button aria-label="Rete evidenziata"><svg class="ic"><use href="#i-netd"/></svg></button><button aria-label="Accendi"><svg class="ic"><use href="#i-bulbgray"/></svg></button><button aria-label="Spegni"><svg class="ic"><use href="#i-bulbline"/></svg></button><i class="sep"></i><button aria-label="Aggiorna vista"><svg class="ic"><use href="#i-sync"/></svg></button><button aria-label="Elenco"><svg class="ic"><use href="#i-list"/></svg></button>
      </div>
      <div class="results"></div>
    </div>
    <header class="dhead"><h2>Interroga</h2><button aria-label="Menu"><svg class="ic10"><use href="#i-tri"/></svg></button><button aria-label="Blocca"><svg class="ic10"><use href="#i-pin"/></svg></button><button aria-label="Chiudi"><svg class="ic10"><use href="#i-x"/></svg></button></header>
    <div class="query"></div>
  </aside>
</main>

<footer>
  <div class="status"><span>Selezione di un &nbsp;GRUPPO: Fare clic su un elemento del gruppo da selezionare.</span><span class="push-r">[Struttura]</span><span class="units">kg / cm</span></div>
  <div class="status tools">
    <button aria-label="Ridisegna"><svg class="ic"><use href="#i-redraw"/></svg></button>
    <button aria-label="WireFrame"><svg class="ic"><use href="#i-wire"/></svg></button>
    <button aria-label="Solido" class="sel"><svg class="ic"><use href="#i-solid"/></svg></button>
    <button aria-label="Solido con fili fissi"><svg class="ic"><use href="#i-solidh"/></svg></button>
    <button aria-label="Offset"><svg class="ic"><use href="#i-offset"/></svg></button>
    <button aria-label="Oscura nodi" class="sel"><svg class="ic"><use href="#i-dim"/></svg></button>
    <button aria-label="Viste" class="viewbtn"><svg class="ic"><use href="#i-cube"/></svg><svg class="ic8"><use href="#i-chev"/></svg></button>
    <label class="dark" for="vista">Vista :</label>
    <div class="combo flat"><select id="vista"><option>Normale</option></select><svg class="ic8"><use href="#i-tri"/></svg></div>
    <span class="ready">Pronto</span>
    <span class="push-r elem">travi fondazione</span>
    <svg class="ic st"><use href="#i-binoerr"/></svg><svg class="ic st"><use href="#i-finderr"/></svg><svg class="ic st"><use href="#i-reserr"/></svg>
  </div>
</footer>
</body>
</html>
```
FILE: styles.css
```css
* { box-sizing: border-box; }
html, body { margin: 0; }
body {
  min-height: 100vh; display: flex; flex-direction: column;
  background: #f0f0f0; color: #505050;
  font: 9px/12px "Open Sans", "Noto Sans", sans-serif;
}
button, input, select { font: inherit; color: inherit; margin: 0; padding: 0; border: 0; background: none; border-radius: 0; }
h1, h2, p, ul { margin: 0; padding: 0; font-weight: 400; font-size: inherit; }
svg { display: block; flex: none; }
.defs { position: absolute; width: 0; height: 0; }
.ic { width: 13px; height: 13px; }
.ic6 { width: 6px; height: 6px; }
.ic8 { width: 8px; height: 8px; }
.ic10 { width: 10px; height: 10px; }
.ic12 { width: 12px; height: 12px; }
.ic15 { width: 15px; height: 15px; }
.ic24 { width: 24px; height: 24px; }
.flip { transform: scaleX(-1); }
.flipv { transform: scaleY(-1); }

.titlebar { display: flex; height: 25px; }
.quick { display: flex; align-items: flex-start; width: 242px; padding: 2px 0 0 6px; }
.quick button { width: 19px; height: 17px; display: grid; place-items: center; }
.quick .lit { background: #fff; border-radius: 3px; }
.quick .slim { width: 13px; }
.context-tab { width: 246px; height: 25px; background: #e1e1e1; border-top: 2px solid #c8c8c8; }
.app-title { flex: 1; text-align: center; line-height: 25px; padding-right: 102px; }
.winctl { display: flex; margin-left: -112px; }
.winctl button { width: 38px; height: 25px; display: grid; place-items: center; }

.tabs { display: flex; align-items: center; height: 26px; padding-left: 4px; color: #707070; }
.tabs a { color: inherit; text-decoration: none; text-align: center; line-height: 20px; }
.tabs .t-file { width: 38px; margin-right: 10px; }
.tabs .ctx { color: #1f6fd0; }
.tabs .active { color: #505050; font-weight: 700; }
.tabs .active span { display: block; height: 20px; margin: 0 10px; border-bottom: 2px solid #1b62bf; }
.cmdsearch { display: flex; align-items: center; gap: 9px; width: 160px; height: 20px; margin-left: 10px; padding-left: 7px; background: #fff; border: 1px solid #d0d0d0; border-radius: 4px; }
.cmdsearch input { width: 120px; outline: 0; }
input::placeholder { color: #707070; opacity: 1; }
.help { display: flex; align-items: center; margin-left: auto; gap: 1px; }

.w20 { width: 20px; } .w28 { width: 28px; } .w30 { width: 30px; } .w34 { width: 34px; } .w37 { width: 37px; }
.w38 { width: 38px; } .w41 { width: 41px; } .w42 { width: 42px; } .w43 { width: 43px; } .w45 { width: 45px; }
.w46 { width: 46px; } .w48 { width: 48px; } .w49 { width: 49px; } .w50 { width: 50px; } .w54 { width: 54px; }
.w55 { width: 55px; } .w59 { width: 59px; } .w60 { width: 60px; } .w64 { width: 64px; } .w65 { width: 65px; }
.w66 { width: 66px; } .w95 { width: 95px; } .w97 { width: 97px; } .w100 { width: 100px; } .w112 { width: 112px; }
.w136 { width: 136px; } .w137 { width: 137px; } .w193 { width: 193px; }

.ribbon { display: flex; height: 79px; margin: 0 2px; padding: 2px 0; background: #fff; border: 1px solid #d4d4d4; border-bottom: 2px solid #cdcdcd; border-radius: 6px; white-space: nowrap; }
.rgroup { display: flex; flex-direction: column; border-right: 1px solid #d8d8d8; }
.rgroup h2 { text-align: center; margin-top: auto; padding-bottom: 1px; }
.rbody { display: flex; }
.g-vista { width: 531px; padding-left: 4px; }
.g-nome { width: 84px; padding-left: 4px; }
.g-vis { width: 411px; padding-left: 3px; }
.g-int { width: 261px; padding-left: 4px; }
.g-cubo { width: 106px; padding-left: 4px; }
.g-vista h2 { padding-right: 4px; }
.g-int h2, .g-vis h2, .g-cubo h2 { padding-right: 5px; }
.big { display: flex; flex-direction: column; align-items: center; height: 56px; padding-top: 3px; }
.big .ic24 { margin-bottom: 3px; }
.big .ic8 { margin-top: 2px; }
.big span { display: flex; align-items: center; gap: 1px; }
.big.on, .small .on { background: #e2e2e2; border: 1px solid #bbb; border-radius: 4px; }
.big.on { padding-top: 2px; }
.small { display: flex; flex-direction: column; align-items: flex-start; }
.small button { display: flex; align-items: center; gap: 2px; height: 18px; padding: 0 3px 0 2px; border: 1px solid transparent; }
.small .wide { width: 97px; }
.split { display: flex; }
.split .on:first-child { border-radius: 4px 0 0 4px; border-right: 0; }
.split .drop { padding: 0; border-radius: 0 4px 4px 0; }
button:disabled { color: #b4b4b4; }
.collapse { margin: auto 9px 6px auto; }

.props { display: flex; flex-direction: column; height: 44px; padding: 4px 0 0 6px; }
.prow { display: flex; align-items: center; height: 20px; white-space: nowrap; }
.prow .sep { margin: 0 7px; }
.prow .sep.tight { margin: 0 6px 0 8px; }
.prow button { width: 14px; display: grid; place-items: center; }
.prow .combo + button { margin-left: 7px; }
.prow button + .sep { margin-left: 6px; }
.sep { width: 1px; height: 17px; background: #cfcfcf; }
.combo { display: flex; align-items: center; gap: 2px; height: 18px; background: #fff; border: 1px solid #ccc; border-radius: 3px; padding: 0 4px 0 2px; }
.combo select { flex: 1; min-width: 0; appearance: none; outline: 0; }
.prow input { height: 20px; padding: 0 0 2px 4px; background: #fff; border: 1px solid #d8d8d8; border-radius: 3px; }
.l44 { width: 44px; } .l48 { width: 48px; } .l51 { width: 51px; } .l53 { width: 53px; } .l64 { width: 64px; } .l67 { width: 67px; }

.work { flex: 1; display: grid; grid-template-columns: 292px minmax(0, 1fr) 315px; min-height: 600px; }
.dock { display: flex; flex-direction: column; min-height: 0; }
.dhead { display: flex; align-items: center; height: 32px; padding: 0 3px 0 2px; gap: 5px; background: #efefef; }
.dhead h2 { flex: 1; font-size: 16px; line-height: 24px; }
.left .dhead { padding-right: 4px; }
.rightdock .dhead { padding-left: 3px; }
.dbody { flex: 1; display: flex; flex-direction: column; background: #f8f8f8; font: 9px/12px "Liberation Sans", Arial, sans-serif; padding: 9px 8px 9px 7px; }
.switch { display: flex; gap: 7px; height: 17px; line-height: 11px; }
.switch input { appearance: none; width: 47px; height: 17px; border: 1px solid #999; border-radius: 4px; background: linear-gradient(90deg, #f4f4f4 0 10px, #999 10px 11px, #c9c9c9 11px); }
.right { display: flex; justify-content: flex-end; padding: 6px 1px 9px; }
.push { display: flex; align-items: center; justify-content: center; gap: 4px; width: 61px; height: 19px; background: #fdfdfd; border: 1px solid #d4d4d4; border-radius: 4px; color: #aaa; }
.tree { flex: 1; background: #fff; border: 1px solid #d2d2d2; }
.treesearch { display: flex; align-items: center; height: 16px; padding: 0 3px 0 5px; border-bottom: 1px solid #d2d2d2; }
.treesearch input { flex: 1; outline: 0; }
.tree ul { list-style: none; }
.tree li { display: flex; align-items: center; height: 14px; padding-left: 4px; gap: 4px; }
.pgrid { height: 166px; margin-top: 5px; border: 1px solid #d2d2d2; display: flex; flex-direction: column; }
.pgrid table { width: 100%; border-collapse: collapse; table-layout: fixed; }
.c-gut { width: 16px; } .c-key { width: 123px; } .c-more { width: 18px; }
.pgrid tr { height: 14px; background: #fff; }
.pgrid td, .pgrid th { padding: 0 0 0 2px; line-height: 12px; border-bottom: 1px solid #f4f4f4; text-align: left; white-space: nowrap; }
.pgrid .gut { background: #f8f8f8; padding-left: 4px; }
.pgrid .k { border-right: 1px solid #f0f0f0; }
.pgrid th { color: #222; }
.pgrid th span { outline: 1px dotted #aaa; }
.pgrid td.m { padding: 0; }
.pgrid .m button { display: block; width: 13px; height: 12px; line-height: 8px; border: 1px solid #ccc; background: #f0f0f0; margin-left: 2px; }
.desc { margin-top: auto; height: 46px; border-top: 2px solid #d8d8d8; padding: 3px 4px; font-weight: 700; color: #444; }
.dtabs { display: flex; height: 22px; }
.dtabs button { display: flex; align-items: center; gap: 3px; padding: 0 5px 0 1px; }
.dtabs button + button { padding-left: 3px; border-top: 1px solid #ddd; flex: 1; }
.dtabs .cur { background: #f8f8f8; border-right: 1px solid #999; border-bottom: 1px solid #bbb; width: 41px; }

.viewport { margin-left: 5px; background: #fff; border-top: 2px solid #8a8a8a; border-left: 2px solid #8a8a8a; border-right: 1px solid #ddd; min-height: 0; position: relative; }
.scene { position: absolute; inset: 0; width: 100%; height: 100%; }
.model path { stroke: #111; stroke-width: 2.5; stroke-linejoin: round; }
.model .nos { stroke: none; }
.model .ln { fill: none; }
.model .hl { fill: none; stroke: #8fe8c8; stroke-width: 4; }
.model .tp { fill: #603624; }
.model .b1 { fill: #ffe9bf; } .model .b2 { fill: #ffdcb0; } .model .b3 { fill: #ffd0a4; } .model .b4 { fill: #ffb085; }
.model .b5 { fill: #f9956c; } .model .b6 { fill: #e08058; } .model .b7 { fill: #cd734a; }
.model .s1 { fill: #532c20; } .model .s2 { fill: #7a442e; } .model .s3 { fill: #8e4e34; } .model .s4 { fill: #9c563a; } .model .s5 { fill: #ab6040; }
.model .ca { fill: #9af0cd; } .model .cb { fill: #acffe2; } .model .cd { fill: #204435; } .model .cm { fill: #69ba99; }
.model .cn { fill: #2a5a47; } .model .cg { fill: #52a081; } .model .ch { fill: #30674f; } .model .ck { fill: #4a9776; } .model .cj { fill: #38775c; }
.navcube .face { fill: #aaa; stroke: #111; stroke-width: 4; }
.navcube text { font-family: "Liberation Sans", Arial, sans-serif; font-weight: 700; fill: #111; }
.navcube .pos { font-size: 32px; }
.navcube .sm { font-size: 18px; }

.rightdock { border-left: 6px solid #f0f0f0; }
.find { padding: 8px 0 16px 9px; flex: none; height: 425px; }
.findtop { display: flex; justify-content: space-between; padding-right: 6px; }
.find .switch { gap: 12px; padding-top: 1px; height: 18px; }
.upd { height: 22px; width: 62px; }
.findrow { display: flex; align-items: center; padding: 6px 7px 0 0; }
.findrow label { width: 33px; }
.findrow .combo { flex: 1; height: 19px; border-color: #bbb; }
.pale { opacity: .4; }
.findtools { display: flex; align-items: center; height: 20px; margin-top: 4px; background: #efefef; }
.findtools button { width: 20px; display: grid; place-items: center; }
.findtools .sep { margin: 0 3px; }
.results { flex: 1; margin-right: 8px; border-bottom: 2px solid #e0e0e0; }
.query { flex: 1; background: #f8f8f8; border: 2px solid #909090; border-right: 1px solid #ddd; border-bottom-width: 1px; }

.status { display: flex; align-items: center; height: 20px; padding: 0 10px 0 6px; background: #f8f8f8; border-top: 2px solid #e8e8e8; }
.status span { line-height: 11px; padding-bottom: 1px; }
.push-r { margin-left: auto; }
.units { width: 33px; margin-left: 16px; text-align: right; }
.tools { height: 19px; border-top: 1px solid #d8d8d8; padding-left: 0; padding-right: 4px; }
.tools button { width: 18px; height: 17px; margin-right: 3px; display: flex; align-items: center; justify-content: center; }
.tools button:first-child { width: 15px; }
.tools .sel { background: #c4ced8; border: 1px solid #4878b0; }
.tools .viewbtn { width: 26px; }
.dark { color: #222; margin-left: 2px; }
.flat { width: 61px; height: 17px; border-radius: 0; margin-left: 2px; color: #222; border-color: #e0e0e0; }
.ready { margin-left: 10px; }
.elem { margin-right: 3px; }
.st { margin-left: 14px; }
```
